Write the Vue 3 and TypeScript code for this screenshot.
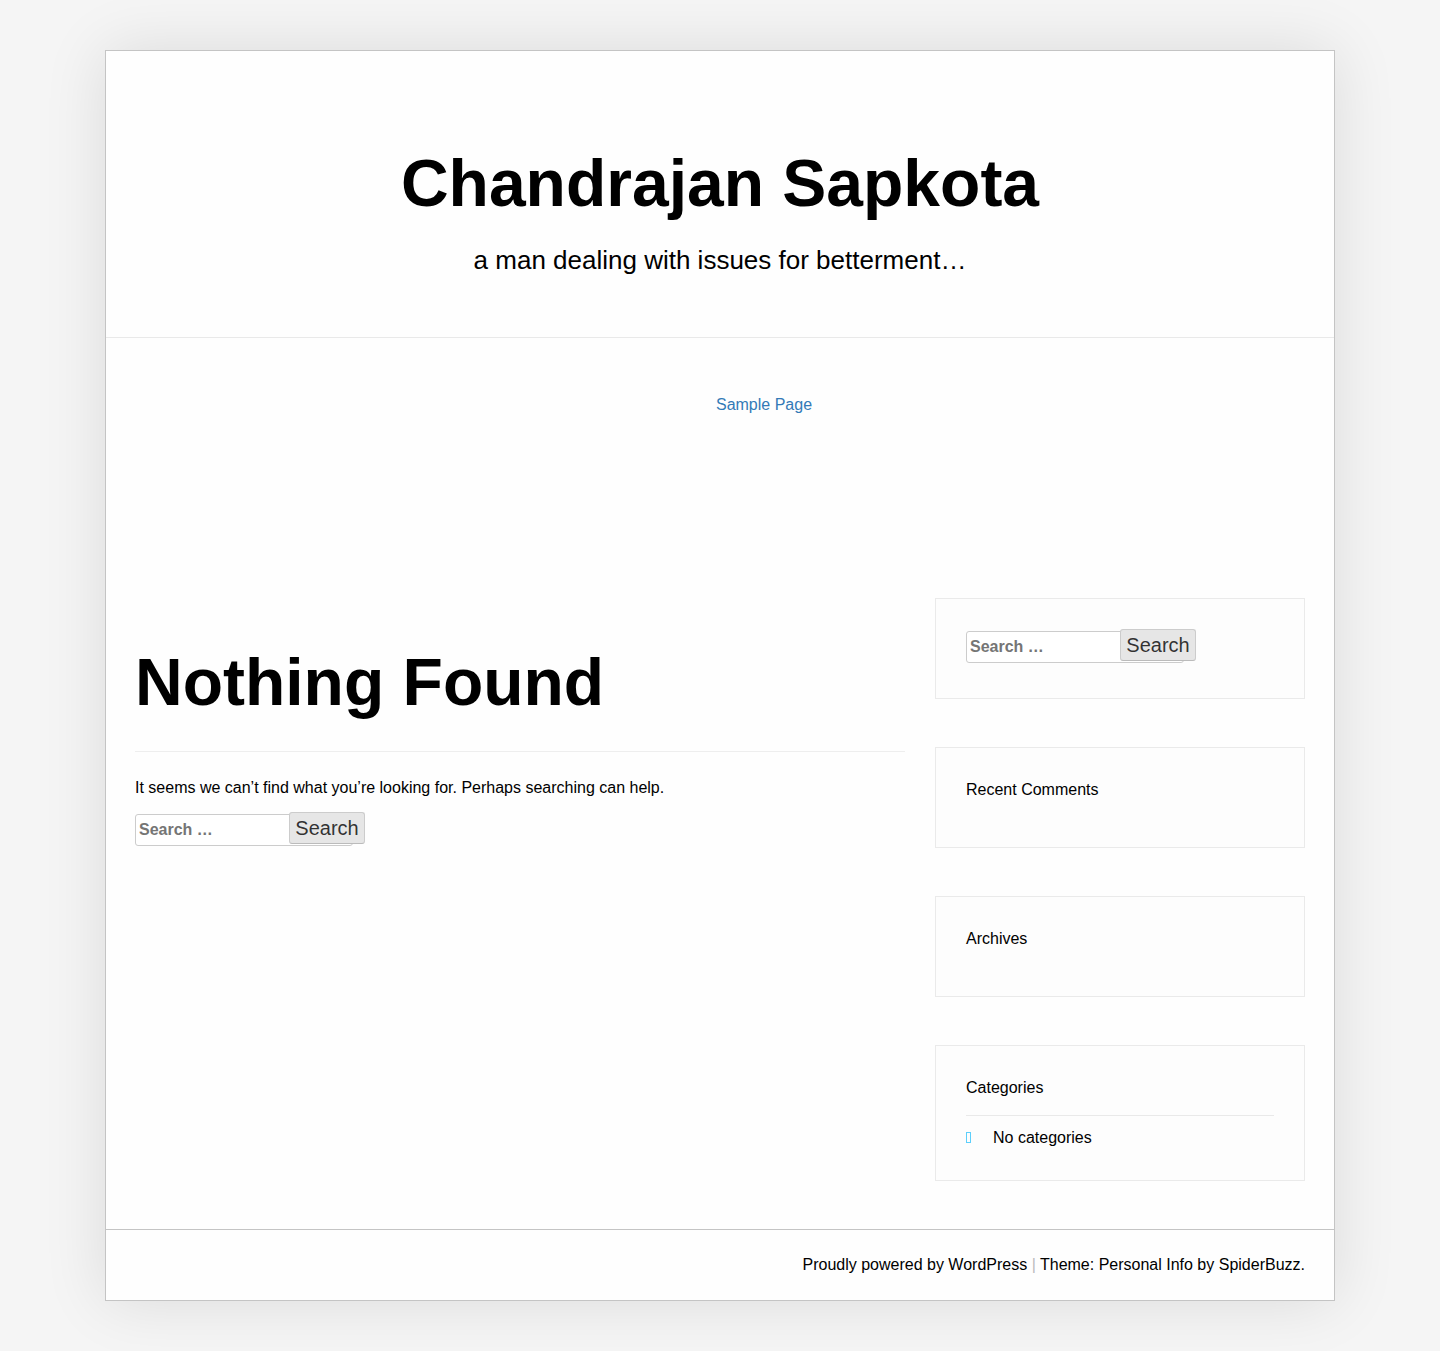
<script setup lang="ts">
interface Widget {
  title: string
  items: string[]
}

const siteTitle = 'Chandrajan Sapkota'
const tagline = 'a man dealing with issues for betterment…'
const widgets: Widget[] = [
  { title: 'Recent Comments', items: [] },
  { title: 'Archives', items: [] },
  { title: 'Categories', items: ['No categories'] },
]
</script>

<template>
  <div class="page">
    <header class="site-header">
      <h1 class="title">{{ siteTitle }}</h1>
      <p class="tagline">{{ tagline }}</p>
    </header>

    <nav class="site-nav">
      <a href="#">Sample Page</a>
    </nav>

    <div class="content">
      <main class="main">
        <h1 class="title main-title">Nothing Found</h1>
        <p class="message">It seems we can’t find what you’re looking for. Perhaps searching can help.</p>
        <form class="search" role="search" @submit.prevent>
          <input type="search" placeholder="Search …" aria-label="Search for:" />
          <button type="submit">Search</button>
        </form>
      </main>

      <aside class="sidebar">
        <section class="widget">
          <form class="search" role="search" @submit.prevent>
            <input type="search" placeholder="Search …" aria-label="Search for:" />
            <button type="submit">Search</button>
          </form>
        </section>
        <section v-for="widget in widgets" :key="widget.title" class="widget">
          <h2>{{ widget.title }}</h2>
          <ul v-if="widget.items.length">
            <li v-for="item in widget.items" :key="item">{{ item }}</li>
          </ul>
        </section>
      </aside>
    </div>

    <footer class="site-footer">
      <a href="#">Proudly powered by WordPress</a>
      <span class="sep"> | </span>
      Theme: Personal Info by <a href="#">SpiderBuzz</a>.
    </footer>
  </div>
</template>

<style>
body {
  margin: 0;
  background: #f5f5f5;
}
</style>

<style scoped>
.page,
.page * {
  box-sizing: border-box;
}

.page {
  max-width: 1230px;
  margin: 50px auto;
  border: 1px solid #c4c4c4;
  background: #fefefe;
  box-shadow: 0 0 60px rgba(0, 0, 0, 0.11);
  color: #000;
  font: 16px/24px "Liberation Sans", Arial, sans-serif;
}

h1,
h2,
p,
ul {
  margin: 0;
  padding: 0;
}

.site-header {
  padding: 96px 29px 57px;
  border-bottom: 1px solid #e9e9e9;
  text-align: center;
}

.title {
  font-size: 66px;
  line-height: 72px;
  font-weight: 700;
}

.tagline {
  margin-top: 21px;
  font-size: 26px;
  line-height: 40px;
}

.site-nav {
  display: flex;
  justify-content: center;
  padding: 55px 0 181px 88px;
}

.site-nav a {
  color: #337ab7;
  text-decoration: none;
}

.content {
  display: flex;
  gap: 30px;
  padding: 0 29px 48px;
}

.main {
  flex: 1;
  min-width: 0;
  padding-top: 48px;
}

.main-title {
  padding-bottom: 33px;
  border-bottom: 1px solid #eee;
}

.message {
  margin: 24px 0 12px;
}

.search {
  display: flex;
  align-items: flex-start;
}

.search input {
  width: 218px;
  height: 32px;
  margin: 2px 0 0;
  padding: 3px;
  border: 1px solid #ccc;
  border-radius: 3px;
  background: #fff;
  color: #666;
  font: bold 16px "Liberation Sans", Arial, sans-serif;
  appearance: none;
}

.search input::placeholder {
  color: #757575;
}

.search button {
  position: relative;
  width: 76px;
  height: 32px;
  margin: 0 0 0 -64px;
  padding: 0;
  border: 1px solid;
  border-color: #ccc #ccc #bbb;
  border-radius: 3px;
  background: #e6e6e6;
  color: rgba(0, 0, 0, 0.8);
  font: 20px/30px "Liberation Sans", Arial, sans-serif;
}

.sidebar {
  display: flex;
  flex: 0 0 370px;
  flex-direction: column;
  gap: 48px;
}

.widget {
  min-height: 101px;
  padding: 30px;
  border: 1px solid #eaeaea;
  background: #fdfdfd;
}

.widget h2 {
  font-size: 16px;
  line-height: 24px;
  font-weight: 400;
}

.widget ul {
  margin-top: 15px;
  list-style: none;
}

.widget li {
  display: flex;
  align-items: flex-start;
  gap: 22px;
  padding-top: 10px;
  border-top: 1px solid #e9e9e9;
}

.widget li::before {
  content: "";
  box-sizing: border-box;
  width: 5px;
  height: 11px;
  margin-top: 6px;
  border: 1px solid #5dcffb;
}

.site-footer {
  padding: 23px 29px;
  border-top: 1px solid #c4c4c4;
  text-align: right;
}

.site-footer a {
  color: inherit;
  text-decoration: none;
}

.sep {
  color: #bbb;
}
</style>
